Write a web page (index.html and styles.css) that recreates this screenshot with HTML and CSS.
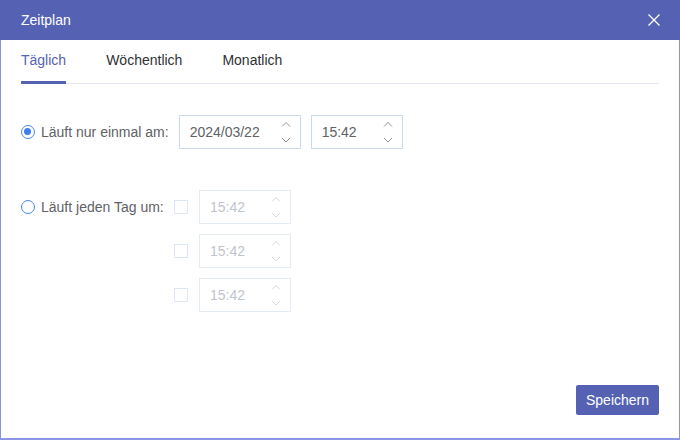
FILE: index.html
```html
<!DOCTYPE html>
<html lang="de">
<head>
<meta charset="utf-8">
<title>Zeitplan</title>
<link rel="stylesheet" href="styles.css">
</head>
<body>
<div class="dialog">
  <div class="header">
    <span class="title">Zeitplan</span>
    <svg class="close" width="12" height="12" viewBox="0 0 12 12"><path d="M0.5 0.5L11.5 11.5M11.5 0.5L0.5 11.5" stroke="#fff" stroke-width="1.3" fill="none"/></svg>
  </div>
  <div class="body">
    <div class="tabs">
      <div class="tab active">Täglich</div>
      <div class="tab">Wöchentlich</div>
      <div class="tab">Monatlich</div>
    </div>
    <div class="row once">
      <span class="radio checked"></span>
      <span class="label">Läuft nur einmal am:</span>
      <div class="field date">
        <span class="value">2024/03/22</span>
        <span class="spin"><svg width="10" height="24" viewBox="0 0 10 24"><path d="M1 6.5L5 2.5L9 6.5M1 18L5 22L9 18" stroke="#909399" stroke-width="1" fill="none"/></svg></span>
      </div>
      <div class="field time">
        <span class="value">15:42</span>
        <span class="spin"><svg width="10" height="24" viewBox="0 0 10 24"><path d="M1 6.5L5 2.5L9 6.5M1 18L5 22L9 18" stroke="#909399" stroke-width="1" fill="none"/></svg></span>
      </div>
    </div>
    <div class="row daily">
      <div class="daily-head">
        <span class="radio"></span>
        <span class="label">Läuft jeden Tag um:</span>
      </div>
      <div class="slots">
        <div class="slot">
          <span class="check"></span>
          <div class="field time disabled">
            <span class="value">15:42</span>
            <span class="spin"><svg width="10" height="24" viewBox="0 0 10 24"><path d="M1 6.5L5 2.5L9 6.5M1 18L5 22L9 18" stroke="#d4d7de" stroke-width="1" fill="none"/></svg></span>
          </div>
        </div>
        <div class="slot">
          <span class="check"></span>
          <div class="field time disabled">
            <span class="value">15:42</span>
            <span class="spin"><svg width="10" height="24" viewBox="0 0 10 24"><path d="M1 6.5L5 2.5L9 6.5M1 18L5 22L9 18" stroke="#d4d7de" stroke-width="1" fill="none"/></svg></span>
          </div>
        </div>
        <div class="slot">
          <span class="check"></span>
          <div class="field time disabled">
            <span class="value">15:42</span>
            <span class="spin"><svg width="10" height="24" viewBox="0 0 10 24"><path d="M1 6.5L5 2.5L9 6.5M1 18L5 22L9 18" stroke="#d4d7de" stroke-width="1" fill="none"/></svg></span>
          </div>
        </div>
      </div>
    </div>
    <div class="footer">
      <button class="save">Speichern</button>
    </div>
  </div>
</div>
</body>
</html>
```
FILE: styles.css
```css
html, body {
  margin: 0;
  padding: 0;
  background: #fff;
}
body {
  font-family: "Liberation Sans", Arial, sans-serif;
  font-size: 14px;
}
.dialog {
  width: 680px;
  height: 440px;
  display: flex;
  flex-direction: column;
}
.header {
  height: 40px;
  flex: none;
  background: #5562b4;
  color: #fff;
  display: flex;
  align-items: center;
  justify-content: space-between;
  padding: 0 20px 0 21px;
}
.title {
  font-size: 14px;
}
.close {
  display: block;
}
.body {
  flex: 1;
  border: 1px solid #8c95e4;
  border-top: none;
  border-bottom-width: 2px;
  padding: 0 20px;
  display: flex;
  flex-direction: column;
}
.tabs {
  display: flex;
  gap: 40px;
  border-bottom: 1px solid #e4e7ed;
}
.tab {
  padding: 11px 0 12px;
  line-height: 18px;
  color: #303133;
  border-bottom: 3px solid transparent;
  margin-bottom: -1px;
}
.tab.active {
  color: #5562b4;
  border-bottom-color: #5562b4;
}
.row {
  display: flex;
  align-items: center;
}
.once {
  margin-top: 31px;
}
.radio {
  width: 14px;
  height: 14px;
  box-sizing: border-box;
  border: 1.5px solid #4a86ef;
  border-radius: 50%;
  margin-right: 6px;
  flex: none;
  position: relative;
}
.radio.checked::after {
  content: "";
  position: absolute;
  left: 2px;
  top: 2px;
  width: 7px;
  height: 7px;
  border-radius: 50%;
  background: #3f7ef0;
}
.label {
  color: #606266;
  line-height: 18px;
}
.once .label {
  margin-right: 10px;
}
.field {
  height: 34px;
  box-sizing: border-box;
  border: 1px solid #c9d9f2;
  display: flex;
  align-items: center;
  justify-content: space-between;
  padding: 0 9px 0 10px;
  color: #606266;
}
.field.date {
  width: 122px;
  margin-right: 10px;
}
.field.time {
  width: 92px;
}
.field.disabled {
  border-color: #e6ecf6;
  color: #c0c4cc;
}
.value {
  line-height: 18px;
}
.spin svg {
  display: block;
}
.daily {
  margin-top: 41px;
  align-items: flex-start;
}
.daily-head {
  width: 153px;
  height: 34px;
  display: flex;
  align-items: center;
  flex: none;
}
.slots {
  display: flex;
  flex-direction: column;
  gap: 10px;
}
.slot {
  display: flex;
  align-items: center;
  gap: 11px;
}
.check {
  width: 14px;
  height: 14px;
  box-sizing: border-box;
  border: 1px solid #dde6f5;
}
.footer {
  margin-top: auto;
  display: flex;
  justify-content: flex-end;
  padding-bottom: 23px;
}
.save {
  width: 83px;
  height: 30px;
  background: #5562b4;
  color: #fff;
  border: none;
  border-radius: 2px;
  font-family: "Liberation Sans", Arial, sans-serif;
  font-size: 14px;
  padding: 0;
}
```
